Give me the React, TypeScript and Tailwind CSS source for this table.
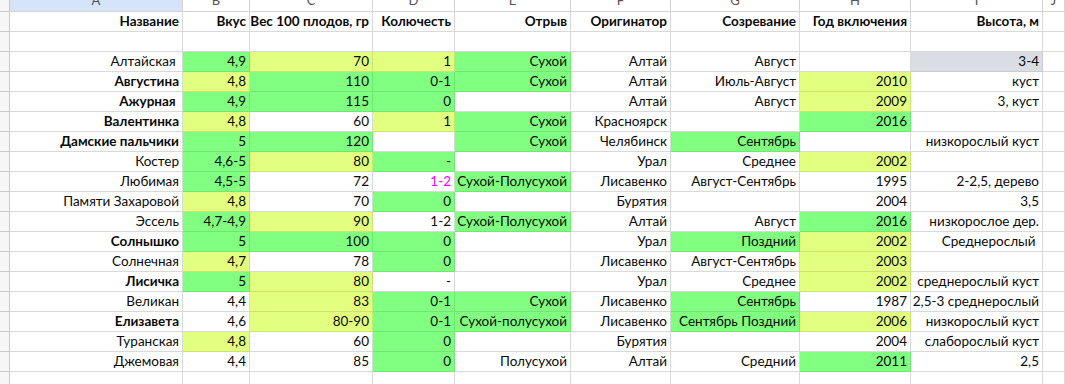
import React from 'react';

type Tone = 'g' | 'y' | 's' | 'm' | '';
type Cell = [string, Tone?];
type Row = { name: string; bold?: boolean; cells: Cell[] };

const COLS = 'grid grid-cols-[10px_173px_67px_123px_82px_116px_100px_129px_111px_132px_1fr]';

const toneClass: Record<string, string> = {
  g: 'bg-[#80ff80] border-[#6fe86f]',
  y: 'bg-[#e2ff80] border-[#cce36f]',
  s: 'bg-[#dadde4] border-[#c6cad3]',
  m: 'bg-white border-[#d9d9d9] text-[#ff00ff]',
  '': 'bg-white border-[#d9d9d9]',
};

const headers = ['Название', 'Вкус', 'Вес 100 плодов, гр', 'Колючесть', 'Отрыв', 'Оригинатор', 'Созревание', 'Год включения', 'Высота, м'];
const letters = ['A', 'B', 'C', 'D', 'E', 'F', 'G', 'H', 'I', 'J'];

const rows: Row[] = [
  { name: 'Алтайская ', cells: [['4,9', 'g'], ['70', 'y'], ['1', 'y'], ['Сухой', 'g'], ['Алтай'], ['Август'], [''], ['3-4', 's']] },
  { name: 'Августина', bold: true, cells: [['4,8', 'y'], ['110', 'g'], ['0-1', 'g'], ['Сухой', 'g'], ['Алтай'], ['Июль-Август'], ['2010', 'y'], ['куст']] },
  { name: 'Ажурная ', bold: true, cells: [['4,9', 'g'], ['115', 'g'], ['0', 'g'], [''], ['Алтай'], ['Август'], ['2009', 'y'], ['3, куст']] },
  { name: 'Валентинка', bold: true, cells: [['4,8', 'y'], ['60'], ['1', 'y'], ['Сухой', 'g'], ['Красноярск'], [''], ['2016', 'g'], ['']] },
  { name: 'Дамские пальчики', bold: true, cells: [['5', 'g'], ['120', 'g'], [''], ['Сухой', 'g'], ['Челябинск'], ['Сентябрь', 'g'], [''], ['низкорослый куст']] },
  { name: 'Костер', cells: [['4,6-5', 'g'], ['80', 'y'], ['-', 'g'], [''], ['Урал'], ['Среднее'], ['2002', 'y'], ['']] },
  { name: 'Любимая', cells: [['4,5-5', 'g'], ['72'], ['1-2', 'm'], ['Сухой-Полусухой', 'g'], ['Лисавенко'], ['Август-Сентябрь'], ['1995'], ['2-2,5, дерево']] },
  { name: 'Памяти Захаровой', cells: [['4,8', 'y'], ['70'], ['0', 'g'], [''], ['Бурятия'], [''], ['2004'], ['3,5']] },
  { name: 'Эссель', cells: [['4,7-4,9', 'g'], ['90', 'y'], ['1-2'], ['Сухой-Полусухой', 'g'], ['Алтай'], ['Август'], ['2016', 'g'], ['низкорослое дер.']] },
  { name: 'Солнышко', bold: true, cells: [['5', 'g'], ['100', 'g'], ['0', 'g'], [''], ['Урал'], ['Поздний', 'g'], ['2002', 'y'], ['Среднерослый ']] },
  { name: 'Солнечная', cells: [['4,7', 'y'], ['78'], ['0', 'g'], [''], ['Лисавенко'], ['Август-Сентябрь'], ['2003', 'y'], ['']] },
  { name: 'Лисичка', bold: true, cells: [['5', 'g'], ['80', 'y'], ['-'], [''], ['Урал'], ['Среднее'], ['2002', 'y'], ['среднерослый куст']] },
  { name: 'Великан', cells: [['4,4'], ['83', 'y'], ['0-1', 'g'], ['Сухой', 'g'], ['Лисавенко'], ['Сентябрь', 'g'], ['1987'], ['2,5-3 среднерослый']] },
  { name: 'Елизавета', bold: true, cells: [['4,6'], ['80-90', 'y'], ['0-1', 'g'], ['Сухой-полусухой', 'g'], ['Лисавенко'], ['Сентябрь Поздний', 'g'], ['2006', 'y'], ['низкорослый куст']] },
  { name: 'Туранская', cells: [['4,8', 'y'], ['60'], ['0', 'g'], [''], ['Бурятия'], [''], ['2004'], ['слаборослый куст']] },
  { name: 'Джемовая', cells: [['4,4'], ['85'], ['0', 'g'], ['Полусухой'], ['Алтай'], ['Средний'], ['2011', 'g'], ['2,5']] },
];

function RowHead() {
  return <div className="bg-[#f6f6f6] border-r border-b border-[#c9c9c9]" />;
}

function Td({ text, tone = '', bold }: { text: string; tone?: Tone; bold?: boolean }) {
  return (
    <div
      className={`h-[20px] border-r border-b flex items-end justify-end pr-[3px] pb-[1px] whitespace-pre overflow-hidden leading-[17px] ${toneClass[tone]} ${bold ? 'font-bold' : ''}`}>
      {text}
    </div>
  );
}

export default function App() {
  return (
    <div className="w-[1065px] h-[384px] overflow-hidden bg-white text-[13.5px] text-[#0a0a0a] font-['Lato','Liberation_Sans',sans-serif]">
      {/* column letters */}
      <div className={`${COLS} h-[12px]`}>
        <div className="bg-[#f6f6f6] border-r border-b border-[#c9c9c9]" />
        {letters.map((l, i) =>
          <div
            key={l}
            className={`border-r border-b border-[#d4d4d4] overflow-hidden flex justify-center text-[13px] text-[#555] ${i === 0 ? 'bg-[#d5e4f8]' : 'bg-white'}`}>
            <span className="leading-[20px] -mt-[10px]">{l}</span>
          </div>
        )}
      </div>

      {/* header row */}
      <div className={COLS}>
        <RowHead />
        {headers.map((h) => <Td key={h} text={h} bold />)}
        <Td text="" />
      </div>

      {/* empty row */}
      <div className={COLS}>
        <RowHead />
        {headers.map((h) => <Td key={h} text="" />)}
        <Td text="" />
      </div>

      {rows.map((r) =>
        <div key={r.name} className={COLS}>
          <RowHead />
          <Td text={r.name} bold={r.bold} />
          {r.cells.map((c, i) => <Td key={i} text={c[0]} tone={c[1]} />)}
          <Td text="" />
        </div>
      )}

      {/* trailing row */}
      <div className={COLS}>
        <RowHead />
        {headers.map((h) => <Td key={h} text="" />)}
        <Td text="" />
      </div>
    </div>
  );
}
